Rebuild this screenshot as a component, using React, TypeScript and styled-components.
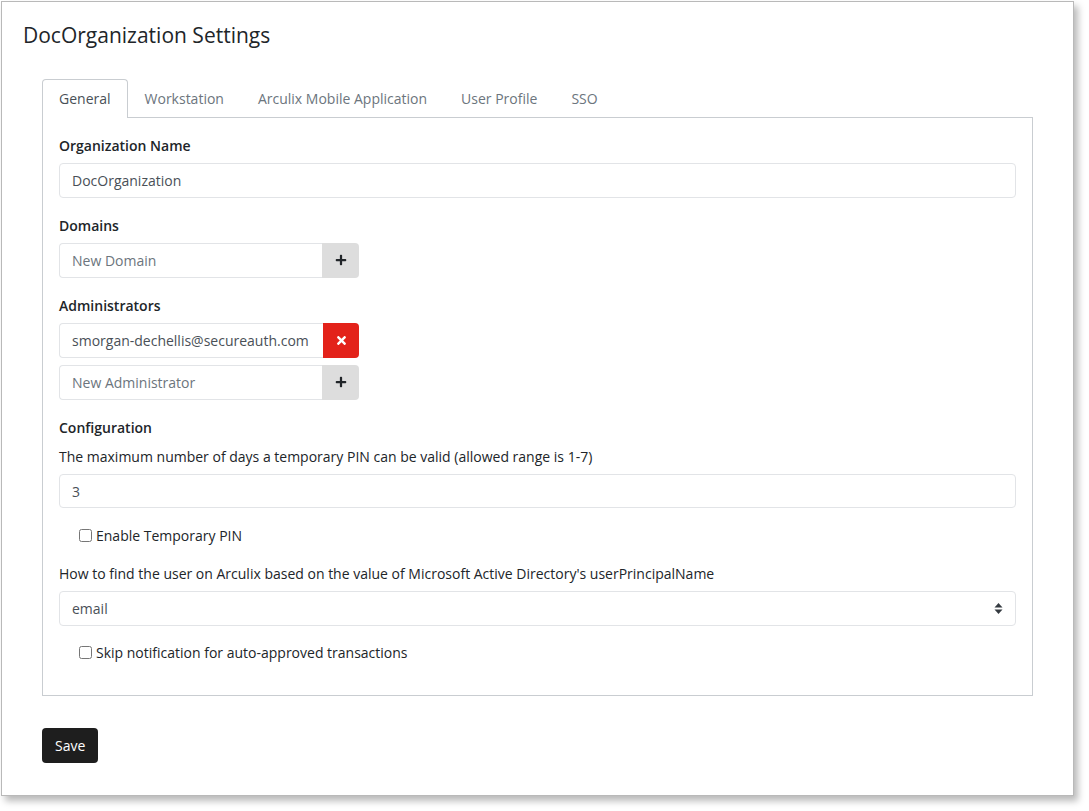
import { createGlobalStyle, styled } from "styled-components";
import { FaPlus, FaTimes } from "react-icons/fa";

const GlobalStyle = createGlobalStyle`
  html, body {
    margin: 0;
    padding: 0;
    background: #ffffff;
  }
  body {
    font-family: "Open Sans", "Noto Sans", sans-serif;
    font-size: 14px;
    color: #212529;
  }
  * {
    box-sizing: border-box;
  }
`;

const tabs = ["General", "Workstation", "Arculix Mobile Application", "User Profile", "SSO"];

const App = () => {
  return (
    <>
      <GlobalStyle />
      <Page>
        <Frame>
          <Title>DocOrganization Settings</Title>
          <Content>
            <TabBar>
              {tabs.map((t, i) => (
                <Tab key={t} $active={i === 0}>{t}</Tab>
              ))}
            </TabBar>
            <Panel>
              <Label>Organization Name</Label>
              <Input defaultValue="DocOrganization" />

              <Label>Domains</Label>
              <Group $gap={17}>
                <GroupInput placeholder="New Domain" />
                <AddButton><FaPlus size={12} /></AddButton>
              </Group>

              <Label>Administrators</Label>
              <Group $gap={7}>
                <GroupInput defaultValue="smorgan-dechellis@secureauth.com" />
                <RemoveButton><FaTimes size={13} /></RemoveButton>
              </Group>
              <Group $gap={17}>
                <GroupInput placeholder="New Administrator" />
                <AddButton><FaPlus size={12} /></AddButton>
              </Group>

              <Label>Configuration</Label>
              <Help>The maximum number of days a temporary PIN can be valid (allowed range is 1-7)</Help>
              <Input defaultValue="3" />
              <Check>
                <input type="checkbox" />
                <span>Enable Temporary PIN</span>
              </Check>

              <Help>How to find the user on Arculix based on the value of Microsoft Active Directory's userPrincipalName</Help>
              <SelectBox>
                <span>email</span>
                <svg width="9" height="13" viewBox="0 0 9 13">
                  <path d="M4.5 1 L8.5 5.5 L0.5 5.5 Z" fill="#343a40" />
                  <path d="M4.5 12 L8.5 7.5 L0.5 7.5 Z" fill="#343a40" />
                </svg>
              </SelectBox>
              <Check>
                <input type="checkbox" />
                <span>Skip notification for auto-approved transactions</span>
              </Check>
            </Panel>
            <SaveButton>Save</SaveButton>
          </Content>
        </Frame>
      </Page>
    </>
  );
};

const Page = styled.div`
  padding: 1px 0 0 1px;
  width: 1089px;
  height: 811px;
`;

const Frame = styled.div`
  width: 1073px;
  height: 795px;
  border: 1px solid #b9b9b9;
  background: #ffffff;
  box-shadow: 4px 5px 7px rgba(0, 0, 0, 0.28);
`;

const Title = styled.h1`
  margin: 0;
  padding: 19px 0 0 21px;
  font-size: 21px;
  font-weight: 400;
  line-height: 28px;
  color: #212529;
`;

const Content = styled.div`
  padding: 30px 40px 0 40px;
`;

const TabBar = styled.div`
  display: flex;
  border-bottom: 1px solid #c9cdd1;
`;

const Tab = styled.div<{ $active?: boolean }>`
  padding: 0 16px ${({ $active }) => ($active ? "1px" : "0")};
  height: ${({ $active }) => ($active ? "39px" : "38px")};
  margin-bottom: ${({ $active }) => ($active ? "-1px" : "0")};
  display: flex;
  align-items: center;
  font-size: 14px;
  color: ${({ $active }) => ($active ? "#495057" : "#6c757d")};
  background: #ffffff;
  border: 1px solid ${({ $active }) => ($active ? "#c9cdd1" : "transparent")};
  border-bottom: none;
  border-radius: 4px 4px 0 0;
  cursor: pointer;
`;

const Panel = styled.div`
  border: 1px solid #c9cdd1;
  border-top: none;
  padding: 17px 16px 16px 16px;
  height: 578px;
  display: flex;
  flex-direction: column;
`;

const Label = styled.div`
  font-weight: 600;
  line-height: 21px;
  margin-bottom: 7px;
`;

const Input = styled.input`
  display: block;
  width: 100%;
  height: 35px;
  padding: 6px 12px;
  font-family: inherit;
  font-size: 14px;
  line-height: 21px;
  color: #495057;
  border: 1px solid #e2e4e7;
  border-radius: 4px;
  margin-bottom: 17px;
  outline: none;
  &::placeholder {
    color: #6c757d;
  }
`;

const Group = styled.div<{ $gap: number }>`
  display: flex;
  width: 300px;
  height: 35px;
  margin-bottom: ${({ $gap }) => $gap}px;
`;

const GroupInput = styled.input`
  flex: 1;
  min-width: 0;
  height: 35px;
  padding: 6px 12px;
  font-family: inherit;
  font-size: 14px;
  color: #495057;
  border: 1px solid #e2e4e7;
  border-right: none;
  border-radius: 4px 0 0 4px;
  outline: none;
  &::placeholder {
    color: #6c757d;
  }
`;

const AddButton = styled.button`
  width: 37px;
  height: 35px;
  border: none;
  background: #dddddd;
  color: #212529;
  border-radius: 0 4px 4px 0;
  display: flex;
  align-items: center;
  justify-content: center;
  padding: 0;
  cursor: pointer;
`;

const RemoveButton = styled(AddButton)`
  width: 36px;
  background: #e3221a;
  color: #ffffff;
`;

const Help = styled.div`
  line-height: 21px;
  margin-top: 1px;
  margin-bottom: 7px;
  color: #212529;
`;

const Check = styled.label`
  display: flex;
  align-items: center;
  gap: 4px;
  padding-left: 20px;
  line-height: 21px;
  margin-bottom: 16px;
  input {
    margin: 0;
    width: 13px;
    height: 13px;
  }
`;

const SelectBox = styled.div`
  display: flex;
  align-items: center;
  justify-content: space-between;
  height: 35px;
  padding: 6px 12px;
  border: 1px solid #e2e4e7;
  border-radius: 4px;
  color: #495057;
  margin-bottom: 16px;
`;

const SaveButton = styled.button`
  margin-top: 32px;
  height: 35px;
  padding: 0 13px;
  background: #1e1e1e;
  color: #ffffff;
  font-family: inherit;
  font-size: 14px;
  border: none;
  border-radius: 4px;
  cursor: pointer;
`;

export default App;
